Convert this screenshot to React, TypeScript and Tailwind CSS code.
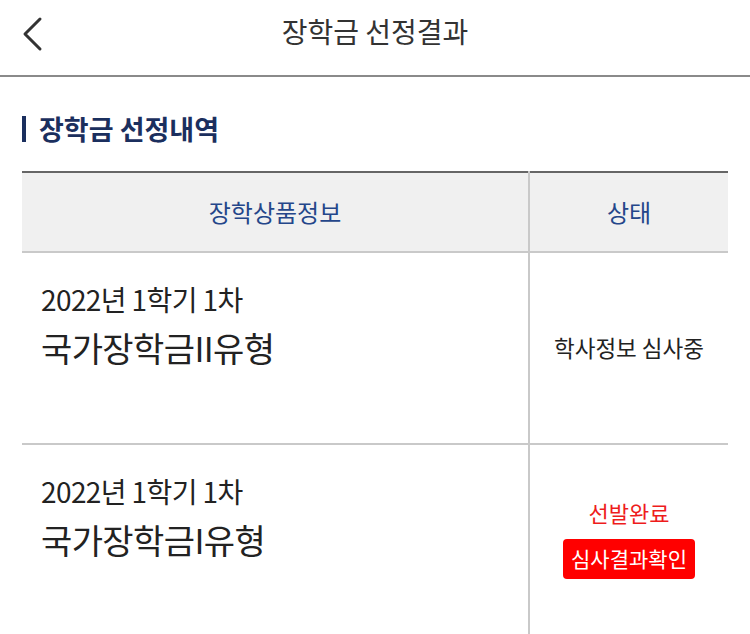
import React from 'react';

const rows = [
  { term: '2022년 1학기 1차', name: '국가장학금II유형', status: 'review' },
  { term: '2022년 1학기 1차', name: '국가장학금I유형', status: 'selected' },
];

const App: React.FC = () => {
  return (
    <div
      className="min-h-screen bg-white text-[#222]"
      style={{ fontFamily: '"Noto Sans CJK KR", "Noto Sans", sans-serif' }}
    >
      <header className="relative flex h-[77px] items-center justify-center border-b-2 border-[#8a8a8a]">
        <button className="absolute left-[18px] top-[16px] text-[#333]">
          <svg width="30" height="36" viewBox="0 0 30 36" fill="none">
            <path d="M22 3 L7 18 L22 33" stroke="#333" strokeWidth="3" strokeLinecap="round" strokeLinejoin="round" />
          </svg>
        </button>
        <h1 className="pb-[14px] text-[28px] leading-none text-[#333]">장학금 선정결과</h1>
      </header>

      <section className="px-[22px] pt-[38px]">
        <h2 className="flex items-center gap-[13px] text-[27px] font-bold leading-none text-[#1b2f5e]">
          <span className="h-[26px] w-[4px] bg-[#1b2f5e]" />
          장학금 선정내역
        </h2>

        <table className="mt-[29px] w-full border-collapse">
          <thead>
            <tr className="h-[80px] border-t-2 border-[#666] bg-[#f0f0f0]">
              <th className="w-[507px] border-b-2 border-r-2 border-[#c9c9c9] text-[24px] font-normal text-[#24468a]">
                장학상품정보
              </th>
              <th className="border-b-2 border-[#c9c9c9] text-[24px] font-normal text-[#24468a]">상태</th>
            </tr>
          </thead>
          <tbody>
            {rows.map((row, idx) => (
              <tr
                key={idx}
                className={idx === rows.length - 1 ? 'h-[220px] align-top' : 'h-[192px] border-b-2 border-[#c9c9c9] align-top'}
              >
                <td className="border-r-2 border-[#c9c9c9] pl-[19px] pt-[28px]">
                  <div className="text-[28px] leading-[36px] tracking-[-0.6px] text-[#222]">{row.term}</div>
                  <div className="mt-[10px] text-[34px] leading-[42px] tracking-[-0.6px] text-[#222]">{row.name}</div>
                </td>
                <td className="text-center">
                  {row.status === 'review' ? (
                    <div className="pt-[78px] text-[22.5px] text-[#222]">학사정보 심사중</div>
                  ) : (
                    <div className="flex flex-col items-center pt-[52px]">
                      <div className="text-[22px] leading-[30px] text-[#ee1c1c]">선발완료</div>
                      <button className="mt-[12px] h-[40px] rounded-[4px] bg-[#ff0000] px-[8px] text-[21px] text-white">
                        심사결과확인
                      </button>
                    </div>
                  )}
                </td>
              </tr>
            ))}
          </tbody>
        </table>
      </section>
    </div>
  );
};

export default App;
